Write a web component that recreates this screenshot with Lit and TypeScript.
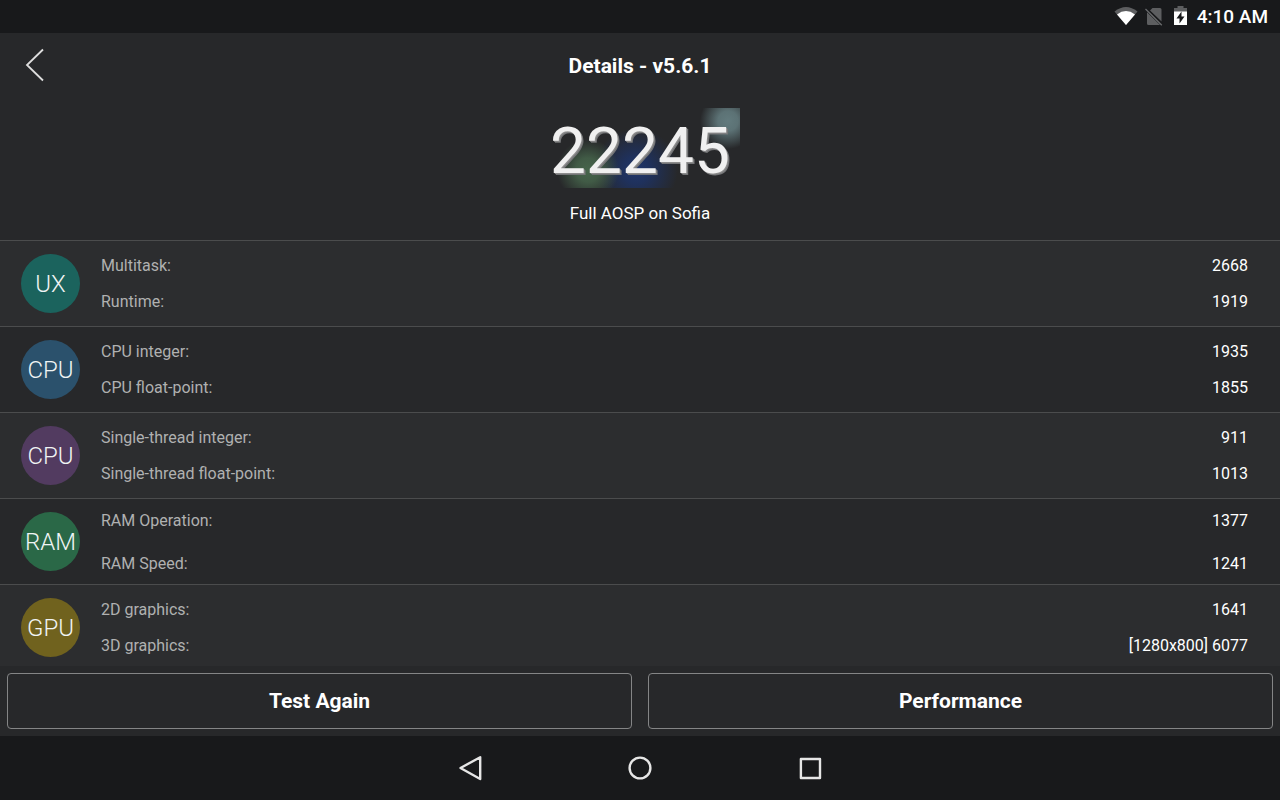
import { LitElement, html, css, svg } from "lit";
import { customElement, property } from "lit/decorators.js";
import { classMap } from "lit/directives/class-map.js";

interface Metric {
  label: string;
  value: string;
}

interface Group {
  badge: string;
  tone: string;
  roomy?: boolean;
  metrics: Metric[];
}

const GROUPS: Group[] = [
  {
    badge: "UX",
    tone: "teal",
    metrics: [
      { label: "Multitask:", value: "2668" },
      { label: "Runtime:", value: "1919" },
    ],
  },
  {
    badge: "CPU",
    tone: "blue",
    metrics: [
      { label: "CPU integer:", value: "1935" },
      { label: "CPU float-point:", value: "1855" },
    ],
  },
  {
    badge: "CPU",
    tone: "purple",
    metrics: [
      { label: "Single-thread integer:", value: "911" },
      { label: "Single-thread float-point:", value: "1013" },
    ],
  },
  {
    badge: "RAM",
    tone: "green",
    roomy: true,
    metrics: [
      { label: "RAM Operation:", value: "1377" },
      { label: "RAM Speed:", value: "1241" },
    ],
  },
  {
    badge: "GPU",
    tone: "olive",
    metrics: [
      { label: "2D graphics:", value: "1641" },
      { label: "3D graphics:", value: "[1280x800] 6077" },
    ],
  },
];

@customElement("status-bar")
export class StatusBar extends LitElement {
  static styles = css`
    :host {
      display: flex;
      justify-content: flex-end;
      align-items: center;
      height: 33px;
      padding-right: 12px;
      background: #18191b;
      color: #fff;
    }
    .icons {
      display: block;
      margin: 0 8px 1px 0;
    }
    .time {
      font-size: 19px;
      line-height: 32px;
      font-weight: 500;
    }
  `;

  render() {
    return html`
      <svg class="icons" width="75" height="24" viewBox="0 0 75 24" aria-hidden="true">
        <path d="M0.5 7.5Q12 -1.5 23.5 7.5L12 21Z" fill="#5d5e60" />
        <path d="M3 10.4Q12 3.8 21 10.4L12 21Z" fill="#fff" />
        <path d="M38.5 4H46Q47.5 4 47.5 5.5V17.6L36 6.4Z" fill="#5d5e60" />
        <path d="M33 8L46 20.5Q45.6 21 45 21H34.5Q33 21 33 19.5Z" fill="#5d5e60" />
        <path d="M31.5 4.5L48 20.8" stroke="#18191b" stroke-width="3" />
        <path d="M31.5 5L47.8 21.2" stroke="#6a6b6d" stroke-width="1.3" />
        <path d="M63.5 2H69.5V4H73V8H60V4H63.5Z" fill="#5d5e60" />
        <path
          fill-rule="evenodd"
          d="M60 7.5H73V21H60ZM67.5 7.5L62.5 14.5H65.5V19.5L70.5 12.5H67.5Z"
          fill="#fff"
        />
      </svg>
      <span class="time">4:10 AM</span>
    `;
  }
}

@customElement("score-group")
export class ScoreGroup extends LitElement {
  @property({ attribute: false }) group!: Group;

  static styles = css`
    :host {
      display: block;
    }
    .row {
      display: flex;
      align-items: center;
      height: 85px;
      padding: 0 32px 0 21px;
      gap: 21px;
      border-top: 1px solid #4b4c4d;
    }
    .badge {
      flex: none;
      height: 59px;
      width: 59px;
      border-radius: 50%;
      color: #f0f4f4;
      text-align: center;
      font-size: 24px;
      line-height: 61px;
      font-weight: 300;
    }
    .teal { background: #1b635d; }
    .blue { background: #2b516c; }
    .purple { background: #523b60; }
    .green { background: #2a6847; }
    .olive { background: #70621e; }
    .metrics {
      flex: 1;
      margin: 0;
      font-size: 16px;
      line-height: 36px;
    }
    .roomy {
      line-height: 43px;
    }
    .metric {
      display: flex;
      justify-content: space-between;
    }
    .label {
      color: #b0b1b1;
    }
    .value {
      margin: 0;
      color: #fff;
    }
  `;

  render() {
    const { badge, tone, roomy, metrics } = this.group;
    return html`
      <div class="row">
        <span class=${classMap({ badge: true, [tone]: true })}>${badge}</span>
        <dl class=${classMap({ metrics: true, roomy: !!roomy })}>
          ${metrics.map(
            (m) => html`
              <div class="metric">
                <dt class="label">${m.label}</dt>
                <dd class="value">${m.value}</dd>
              </div>
            `
          )}
        </dl>
      </div>
    `;
  }
}

@customElement("nav-bar")
export class NavBar extends LitElement {
  static styles = css`
    :host {
      display: flex;
      justify-content: center;
      align-items: center;
      gap: 106px;
      height: 64px;
      background: #18191b;
    }
    .key {
      display: grid;
      place-items: center;
      width: 64px;
      height: 64px;
      padding: 0;
      border: 0;
      background: none;
    }
  `;

  private key(name: string, shape: unknown) {
    return html`
      <button class="key" aria-label=${name}>
        <svg width="28" height="28" viewBox="0 0 28 28" fill="none" stroke="#e6e6e6"
          stroke-width="2.4" stroke-linejoin="round" aria-hidden="true">${shape}</svg>
      </button>
    `;
  }

  render() {
    return html`
      ${this.key("Back", svg`<path d="M24.2 3.2V25L4.5 14Z" />`)}
      ${this.key("Home", svg`<circle cx="14" cy="14" r="10.4" />`)}
      ${this.key("Recent apps", svg`<path d="M4.9 5H24V24H4.9Z" />`)}
    `;
  }
}

@customElement("app-root")
export class AppRoot extends LitElement {
  static styles = css`
    :host {
      display: flex;
      flex-direction: column;
      height: 100vh;
      background: #27282a;
      color: #fff;
      font-family: Roboto, "Noto Sans", sans-serif;
    }
    .header {
      display: grid;
      grid-template-columns: 70px 1fr 70px;
      height: 65px;
    }
    .back {
      display: grid;
      place-items: center;
      height: 64px;
      padding: 0;
      border: 0;
      background: none;
    }
    .title {
      margin: 0;
      text-align: center;
      font-size: 21px;
      line-height: 66px;
      font-weight: 700;
    }
    .summary {
      display: flex;
      flex-direction: column;
      align-items: center;
      padding: 10px 0 17px;
    }
    .score {
      width: 200px;
      height: 80px;
      text-align: center;
      font-size: 64px;
      line-height: 87px;
      color: #f0f0f0;
      text-shadow: 1px 1px 0 #8c8c8c, 2px 2px 0 #747577;
      background:
        radial-gradient(circle at 188px 13px, #627a7d 0, #5c7275 10px, #627a7d00 28px),
        radial-gradient(circle at 48px 62px, #46654b 0, #415b46 12px, #46654b00 31px),
        radial-gradient(circle at 96px 62px, #20366a 0, #1f315c 14px, #20366a00 42px);
    }
    .device {
      margin: 15px 0 0;
      font-size: 17px;
      line-height: 20px;
    }
    .list {
      flex: 1;
      min-height: 0;
      overflow: hidden;
    }
    .group:nth-child(odd) {
      background: #2c2d2f;
    }
    .actions {
      display: grid;
      grid-template-columns: 1fr 1fr;
      gap: 16px;
      padding: 7px;
    }
    .action {
      height: 56px;
      padding: 0;
      border: 1px solid #848586;
      border-radius: 4px;
      background: none;
      color: #fff;
      font-family: inherit;
      font-size: 21px;
      font-weight: 700;
      line-height: 24px;
    }
  `;

  render() {
    return html`
      <status-bar></status-bar>
      <header class="header">
        <button class="back" aria-label="Back">
          <svg width="22" height="34" viewBox="0 0 22 34" fill="none" aria-hidden="true">
            <path d="M19 1.5L3 17L19 32.5" stroke="#dedede" stroke-width="1.8" />
          </svg>
        </button>
        <h1 class="title">Details - v5.6.1</h1>
      </header>
      <section class="summary">
        <div class="score">22245</div>
        <p class="device">Full AOSP on Sofia</p>
      </section>
      <main class="list">
        ${GROUPS.map((g) => html`<score-group class="group" .group=${g}></score-group>`)}
      </main>
      <footer class="actions">
        <button class="action">Test Again</button>
        <button class="action">Performance</button>
      </footer>
      <nav-bar></nav-bar>
    `;
  }
}
